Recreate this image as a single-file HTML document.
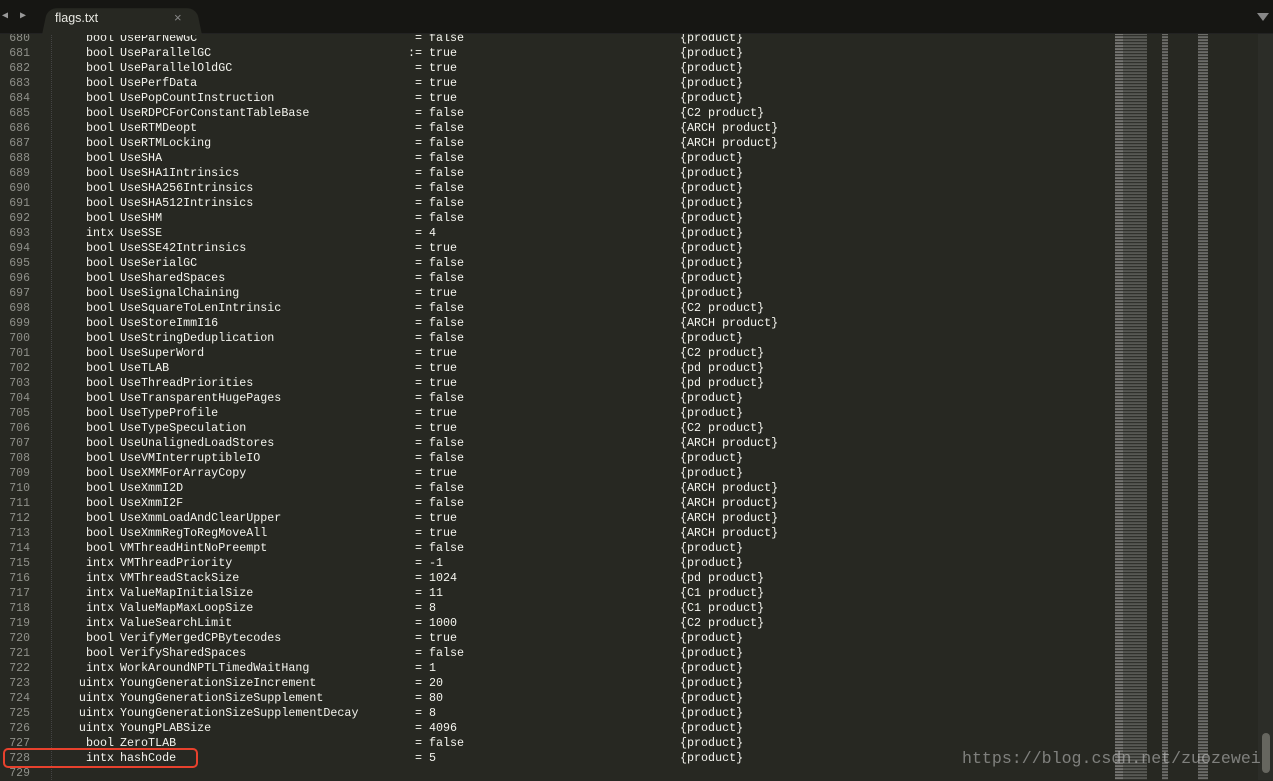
<!DOCTYPE html>
<html><head><meta charset="utf-8"><style>
*{margin:0;padding:0;box-sizing:border-box}
body{width:1273px;height:780px;overflow:hidden;background:#272822;position:relative;font-family:"Liberation Mono","DejaVu Sans Mono",monospace;font-size:11.7px;color:#f4f4ee}
#bar{position:absolute;left:0;top:0;width:1273px;height:34px;background:#161613;z-index:5;border-bottom:1px solid #222}
#tab{position:absolute;left:42px;top:6px;width:160px;height:29px;background:#272822;border-radius:10px 10px 0 0;transform:perspective(40px) rotateX(6deg);transform-origin:bottom}
#tabt{position:absolute;left:55px;top:11px;font-family:"Liberation Sans",sans-serif;font-size:12.5px;color:#e8e8e2}
#tabx{position:absolute;left:174px;top:10px;font-family:"Liberation Sans",sans-serif;font-size:13px;color:#888}
#nav{position:absolute;left:2px;top:10px;font-size:10px;color:#999;letter-spacing:3px}
#dd{position:absolute;left:1257px;top:13px;width:0;height:0;border-left:6px solid transparent;border-right:6px solid transparent;border-top:8px solid #888}
#code{position:absolute;left:0;top:31px;width:1110px}
.r{position:relative;height:15px;line-height:15px;white-space:pre}
.r span{position:absolute;top:0}
.n{left:0;width:30px;text-align:right;color:#8f908a;font-size:11.5px}
.t{left:58px;width:56px;text-align:right}
.k{left:120px}
.o{left:402px;width:20px;text-align:right}
.v{left:429px}
.f{left:680px}
#guide{position:absolute;left:51px;top:34px;height:746px;border-left:1px dotted #444}
#mm{position:absolute;left:1115px;top:34px;width:100px;height:746px}
.mc{position:absolute;top:0;height:746px;background:repeating-linear-gradient(#8a8a85 0 1px,#3a3a35 1px 2px,#777 2px 3px)}
#sb{position:absolute;left:1258px;top:34px;width:15px;height:746px;background:#2c2d28}
#th{position:absolute;left:1262px;top:733px;width:8px;height:40px;background:#66665f;border-radius:4px}
#box{position:absolute;left:3px;top:748px;width:195px;height:20px;border:2px solid #e8412d;border-radius:5px}
#wm{position:absolute;left:962px;top:749px;font-family:"Liberation Mono",monospace;font-size:16.6px;color:rgba(200,200,200,.55)}
</style></head><body>
<div id="guide"></div>
<div id="code">
<div class="r"><span class="n">680</span><span class="t">bool</span><span class="k">UseParNewGC</span><span class="o">=</span><span class="v">false</span><span class="f">{product}</span></div>
<div class="r"><span class="n">681</span><span class="t">bool</span><span class="k">UseParallelGC</span><span class="o">:=</span><span class="v">true</span><span class="f">{product}</span></div>
<div class="r"><span class="n">682</span><span class="t">bool</span><span class="k">UseParallelOldGC</span><span class="o">=</span><span class="v">true</span><span class="f">{product}</span></div>
<div class="r"><span class="n">683</span><span class="t">bool</span><span class="k">UsePerfData</span><span class="o">=</span><span class="v">true</span><span class="f">{product}</span></div>
<div class="r"><span class="n">684</span><span class="t">bool</span><span class="k">UsePopCountInstruction</span><span class="o">=</span><span class="v">true</span><span class="f">{product}</span></div>
<div class="r"><span class="n">685</span><span class="t">bool</span><span class="k">UseRDPCForConstantTableBase</span><span class="o">=</span><span class="v">false</span><span class="f">{C2 product}</span></div>
<div class="r"><span class="n">686</span><span class="t">bool</span><span class="k">UseRTMDeopt</span><span class="o">=</span><span class="v">false</span><span class="f">{ARCH product}</span></div>
<div class="r"><span class="n">687</span><span class="t">bool</span><span class="k">UseRTMLocking</span><span class="o">=</span><span class="v">false</span><span class="f">{ARCH product}</span></div>
<div class="r"><span class="n">688</span><span class="t">bool</span><span class="k">UseSHA</span><span class="o">=</span><span class="v">false</span><span class="f">{product}</span></div>
<div class="r"><span class="n">689</span><span class="t">bool</span><span class="k">UseSHA1Intrinsics</span><span class="o">=</span><span class="v">false</span><span class="f">{product}</span></div>
<div class="r"><span class="n">690</span><span class="t">bool</span><span class="k">UseSHA256Intrinsics</span><span class="o">=</span><span class="v">false</span><span class="f">{product}</span></div>
<div class="r"><span class="n">691</span><span class="t">bool</span><span class="k">UseSHA512Intrinsics</span><span class="o">=</span><span class="v">false</span><span class="f">{product}</span></div>
<div class="r"><span class="n">692</span><span class="t">bool</span><span class="k">UseSHM</span><span class="o">=</span><span class="v">false</span><span class="f">{product}</span></div>
<div class="r"><span class="n">693</span><span class="t">intx</span><span class="k">UseSSE</span><span class="o">=</span><span class="v">4</span><span class="f">{product}</span></div>
<div class="r"><span class="n">694</span><span class="t">bool</span><span class="k">UseSSE42Intrinsics</span><span class="o">=</span><span class="v">true</span><span class="f">{product}</span></div>
<div class="r"><span class="n">695</span><span class="t">bool</span><span class="k">UseSerialGC</span><span class="o">=</span><span class="v">false</span><span class="f">{product}</span></div>
<div class="r"><span class="n">696</span><span class="t">bool</span><span class="k">UseSharedSpaces</span><span class="o">=</span><span class="v">false</span><span class="f">{product}</span></div>
<div class="r"><span class="n">697</span><span class="t">bool</span><span class="k">UseSignalChaining</span><span class="o">=</span><span class="v">true</span><span class="f">{product}</span></div>
<div class="r"><span class="n">698</span><span class="t">bool</span><span class="k">UseSquareToLenIntrinsic</span><span class="o">=</span><span class="v">false</span><span class="f">{C2 product}</span></div>
<div class="r"><span class="n">699</span><span class="t">bool</span><span class="k">UseStoreImmI16</span><span class="o">=</span><span class="v">false</span><span class="f">{ARCH product}</span></div>
<div class="r"><span class="n">700</span><span class="t">bool</span><span class="k">UseStringDeduplication</span><span class="o">=</span><span class="v">false</span><span class="f">{product}</span></div>
<div class="r"><span class="n">701</span><span class="t">bool</span><span class="k">UseSuperWord</span><span class="o">=</span><span class="v">true</span><span class="f">{C2 product}</span></div>
<div class="r"><span class="n">702</span><span class="t">bool</span><span class="k">UseTLAB</span><span class="o">=</span><span class="v">true</span><span class="f">{pd product}</span></div>
<div class="r"><span class="n">703</span><span class="t">bool</span><span class="k">UseThreadPriorities</span><span class="o">=</span><span class="v">true</span><span class="f">{pd product}</span></div>
<div class="r"><span class="n">704</span><span class="t">bool</span><span class="k">UseTransparentHugePages</span><span class="o">=</span><span class="v">false</span><span class="f">{product}</span></div>
<div class="r"><span class="n">705</span><span class="t">bool</span><span class="k">UseTypeProfile</span><span class="o">=</span><span class="v">true</span><span class="f">{product}</span></div>
<div class="r"><span class="n">706</span><span class="t">bool</span><span class="k">UseTypeSpeculation</span><span class="o">=</span><span class="v">true</span><span class="f">{C2 product}</span></div>
<div class="r"><span class="n">707</span><span class="t">bool</span><span class="k">UseUnalignedLoadStores</span><span class="o">=</span><span class="v">false</span><span class="f">{ARCH product}</span></div>
<div class="r"><span class="n">708</span><span class="t">bool</span><span class="k">UseVMInterruptibleIO</span><span class="o">=</span><span class="v">false</span><span class="f">{product}</span></div>
<div class="r"><span class="n">709</span><span class="t">bool</span><span class="k">UseXMMForArrayCopy</span><span class="o">=</span><span class="v">true</span><span class="f">{product}</span></div>
<div class="r"><span class="n">710</span><span class="t">bool</span><span class="k">UseXmmI2D</span><span class="o">=</span><span class="v">false</span><span class="f">{ARCH product}</span></div>
<div class="r"><span class="n">711</span><span class="t">bool</span><span class="k">UseXmmI2F</span><span class="o">=</span><span class="v">false</span><span class="f">{ARCH product}</span></div>
<div class="r"><span class="n">712</span><span class="t">bool</span><span class="k">UseXmmLoadAndClearUpper</span><span class="o">=</span><span class="v">true</span><span class="f">{ARCH product}</span></div>
<div class="r"><span class="n">713</span><span class="t">bool</span><span class="k">UseXmmRegToRegMoveAll</span><span class="o">=</span><span class="v">true</span><span class="f">{ARCH product}</span></div>
<div class="r"><span class="n">714</span><span class="t">bool</span><span class="k">VMThreadHintNoPreempt</span><span class="o">=</span><span class="v">false</span><span class="f">{product}</span></div>
<div class="r"><span class="n">715</span><span class="t">intx</span><span class="k">VMThreadPriority</span><span class="o">=</span><span class="v">-1</span><span class="f">{product}</span></div>
<div class="r"><span class="n">716</span><span class="t">intx</span><span class="k">VMThreadStackSize</span><span class="o">=</span><span class="v">1024</span><span class="f">{pd product}</span></div>
<div class="r"><span class="n">717</span><span class="t">intx</span><span class="k">ValueMapInitialSize</span><span class="o">=</span><span class="v">11</span><span class="f">{C1 product}</span></div>
<div class="r"><span class="n">718</span><span class="t">intx</span><span class="k">ValueMapMaxLoopSize</span><span class="o">=</span><span class="v">8</span><span class="f">{C1 product}</span></div>
<div class="r"><span class="n">719</span><span class="t">intx</span><span class="k">ValueSearchLimit</span><span class="o">=</span><span class="v">1000</span><span class="f">{C2 product}</span></div>
<div class="r"><span class="n">720</span><span class="t">bool</span><span class="k">VerifyMergedCPBytecodes</span><span class="o">=</span><span class="v">true</span><span class="f">{product}</span></div>
<div class="r"><span class="n">721</span><span class="t">bool</span><span class="k">VerifySharedSpaces</span><span class="o">=</span><span class="v">false</span><span class="f">{product}</span></div>
<div class="r"><span class="n">722</span><span class="t">intx</span><span class="k">WorkAroundNPTLTimedWaitHang</span><span class="o">=</span><span class="v">1</span><span class="f">{product}</span></div>
<div class="r"><span class="n">723</span><span class="t">uintx</span><span class="k">YoungGenerationSizeIncrement</span><span class="o">=</span><span class="v">20</span><span class="f">{product}</span></div>
<div class="r"><span class="n">724</span><span class="t">uintx</span><span class="k">YoungGenerationSizeSupplement</span><span class="o">=</span><span class="v">80</span><span class="f">{product}</span></div>
<div class="r"><span class="n">725</span><span class="t">uintx</span><span class="k">YoungGenerationSizeSupplementDecay</span><span class="o">=</span><span class="v">8</span><span class="f">{product}</span></div>
<div class="r"><span class="n">726</span><span class="t">uintx</span><span class="k">YoungPLABSize</span><span class="o">=</span><span class="v">4096</span><span class="f">{product}</span></div>
<div class="r"><span class="n">727</span><span class="t">bool</span><span class="k">ZeroTLAB</span><span class="o">=</span><span class="v">false</span><span class="f">{product}</span></div>
<div class="r"><span class="n">728</span><span class="t">intx</span><span class="k">hashCode</span><span class="o">=</span><span class="v">5</span><span class="f">{product}</span></div>
<div class="r"><span class="n">729</span></div>
</div>
<div id="mm">
<div class="mc" style="left:0;width:8px;opacity:.8"></div>
<div class="mc" style="left:8px;width:24px;opacity:.5"></div>
<div class="mc" style="left:47px;width:6px;opacity:.7"></div>
<div class="mc" style="left:83px;width:10px;opacity:.7"></div>
</div>
<div id="sb"></div>
<div id="th"></div>
<div id="bar"><div id="nav">◀ ▶</div><div id="tab"></div><div id="tabt">flags.txt</div><div id="tabx">×</div><div id="dd"></div></div>
<div id="box"></div>
<div id="wm">https://blog.csdn.net/zuozewei</div>
</body></html>
